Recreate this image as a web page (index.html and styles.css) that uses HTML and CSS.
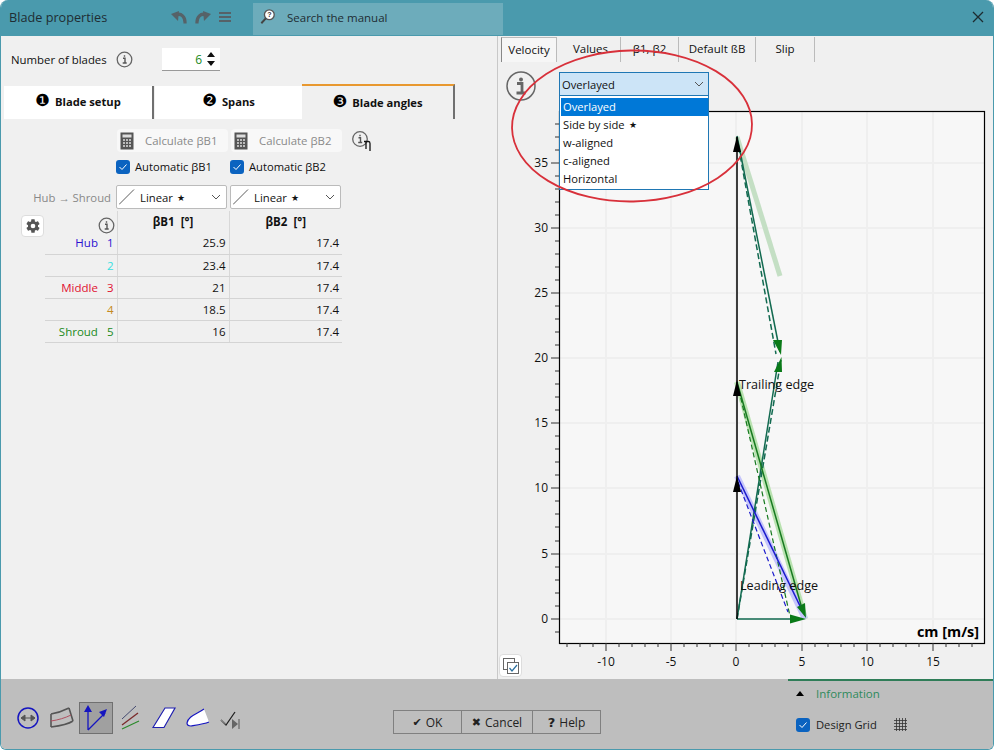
FILE: index.html
```html
<!DOCTYPE html>
<html lang="en">
<head>
<meta charset="utf-8">
<title>Blade properties</title>
<link rel="stylesheet" href="styles.css">
</head>
<body>
<div class="window">
  <header class="titlebar">
    <div class="title">Blade properties</div>
    <div class="title-tools">
      <svg class="ico" width="16" height="14" viewBox="0 0 16 14"><path d="M14 13.500C14.500 7 10 2.500 5 5" fill="none" stroke="#566268" stroke-width="3.200"/><path d="M0 4L8 1l-1 10z" fill="#566268"/></svg>
      <svg class="ico" width="16" height="14" viewBox="0 0 16 14"><path d="M2 13.500C1.500 7 6 2.500 11 5" fill="none" stroke="#566268" stroke-width="3.200"/><path d="M16 4L8 1l1 10z" fill="#566268"/></svg>
      <svg class="ico" width="12" height="10" viewBox="0 0 12 10"><path d="M0 1h12M0 5h12M0 9h12" stroke="#566268" stroke-width="2"/></svg>
    </div>
    <div class="search">
      <svg width="16" height="16" viewBox="0 0 18 18"><circle cx="10.500" cy="6.500" r="5.500" fill="#fff" stroke="#555" stroke-width="1.500"/><path d="M6.500 10.500L1.500 16" stroke="#444" stroke-width="2.200"/><text x="10.500" y="9.500" class="q">?</text></svg>
      <span>Search the manual</span>
    </div>
    <svg class="close" width="12" height="12" viewBox="0 0 12 12"><path d="M1 1l10 10M11 1L1 11" stroke="#1d2b30" stroke-width="1.300"/></svg>
  </header>

  <main class="main">
    <section class="left">
      <div class="blades">
        <span class="blades-label">Number of blades</span>
        <span class="info"><svg width="17" height="17" viewBox="0 0 17 17"><circle cx="8.500" cy="8.500" r="7.300" fill="none" stroke="#666" stroke-width="1.300"/><path d="M7 7.300h2v4.500M6.700 12h4M8.500 4.200v1.600" fill="none" stroke="#555" stroke-width="1.400"/></svg></span>
        <div class="spin"><span class="spin-val">6</span><svg width="10" height="18" viewBox="0 0 10 18"><path d="M5 2l4 5H1zM1 11h8l-4 5z" fill="#111"/></svg></div>
      </div>

      <div class="tabs">
        <div class="tab tab-first"><b class="num">❶</b>Blade setup</div>
        <div class="tab tab-second"><b class="num">❷</b>Spans</div>
        <div class="tab tab-active"><b class="num">❸</b>Blade angles</div>
      </div>

      <div class="angles">
        <div class="calc-row">
          <button class="calc"><svg width="14" height="18" viewBox="0 0 14 18"><rect x="0.500" y="0.500" width="13" height="17" fill="#555"/><rect x="2.500" y="2.500" width="9" height="3" fill="#ddd"/><path d="M3 8h2M6 8h2M9 8h2M3 11h2M6 11h2M9 11h2M3 14h2M6 14h2M9 14h2" stroke="#ddd" stroke-width="1.500"/></svg><span>Calculate βB1</span></button>
          <button class="calc"><svg width="14" height="18" viewBox="0 0 14 18"><rect x="0.500" y="0.500" width="13" height="17" fill="#555"/><rect x="2.500" y="2.500" width="9" height="3" fill="#ddd"/><path d="M3 8h2M6 8h2M9 8h2M3 11h2M6 11h2M9 11h2M3 14h2M6 14h2M9 14h2" stroke="#ddd" stroke-width="1.500"/></svg><span>Calculate βB2</span></button>
          <span class="calc-info"><svg width="24" height="22" viewBox="0 0 24 22"><circle cx="8" cy="8" r="7.300" fill="none" stroke="#666" stroke-width="1.300"/><path d="M6.500 6.800h2v4.500M6.200 11.500h4M8 3.700v1.600" fill="none" stroke="#555" stroke-width="1.400"/><path d="M12 10.500h4.500c1 0 1.500 1 1.500 2V20M14 10v8" fill="none" stroke="#111" stroke-width="1.300"/></svg></span>
        </div>
        <div class="auto-row">
          <label class="check"><span class="box"><svg width="14" height="14" viewBox="0 0 14 14"><path d="M3.500 7l2.500 2.500 4.500-5" fill="none" stroke="#fff" stroke-width="1"/></svg></span>Automatic βB1</label>
          <label class="check"><span class="box"><svg width="14" height="14" viewBox="0 0 14 14"><path d="M3.500 7l2.500 2.500 4.500-5" fill="none" stroke="#fff" stroke-width="1"/></svg></span>Automatic βB2</label>
        </div>
        <div class="dist-row">
          <span class="dist-label">Hub → Shroud</span>
          <div class="combo"><svg width="16" height="16" viewBox="0 0 16 16"><path d="M0 15.500L15 .5" stroke="#333" stroke-width=".8"/></svg><span>Linear <small class="star">★</small></span><svg class="chev" width="10" height="6" viewBox="0 0 10 6"><path d="M1 1l4 4 4-4" fill="none" stroke="#555"/></svg></div>
          <div class="combo"><svg width="16" height="16" viewBox="0 0 16 16"><path d="M0 15.500L15 .5" stroke="#333" stroke-width=".8"/></svg><span>Linear <small class="star">★</small></span><svg class="chev" width="10" height="6" viewBox="0 0 10 6"><path d="M1 1l4 4 4-4" fill="none" stroke="#555"/></svg></div>
        </div>
        <div class="grid-wrap">
          <button class="gear"><svg width="16" height="16" viewBox="0 0 24 24"><path fill="#555" d="M19.430 12.980c.04-.32.070-.64.070-.98s-.03-.66-.07-.98l2.110-1.650c.19-.15.240-.42.120-.64l-2-3.460c-.12-.22-.39-.3-.61-.22l-2.490 1c-.52-.4-1.080-.73-1.690-.98l-.38-2.650A.49.49 0 0 0 14 2h-4c-.25 0-.46.18-.49.42l-.38 2.650c-.61.250-1.170.59-1.690.98l-2.490-1c-.23-.09-.49 0-.61.220l-2 3.460c-.13.220-.07.490.12.640l2.110 1.650c-.04.320-.07.650-.07.980s.03.660.07.980l-2.110 1.650c-.19.150-.24.420-.12.640l2 3.460c.12.220.39.300.61.220l2.490-1c.52.400 1.080.730 1.690.980l.38 2.650c.03.240.24.420.49.420h4c.25 0 .46-.18.490-.42l.38-2.650c.61-.25 1.170-.59 1.690-.98l2.490 1c.23.090.49 0 .61-.22l2-3.460c.12-.22.070-.49-.12-.64zM12 15.500a3.500 3.500 0 1 1 0-7 3.500 3.500 0 0 1 0 7z"/></svg></button>
          <table class="angle-table">
            <thead>
              <tr><th class="th-info"><svg width="17" height="17" viewBox="0 0 17 17"><circle cx="8.500" cy="8.500" r="7.300" fill="none" stroke="#666" stroke-width="1.300"/><path d="M7 7.300h2v4.500M6.700 12h4M8.500 4.200v1.600" fill="none" stroke="#555" stroke-width="1.400"/></svg></th><th>βB1&nbsp; [°]</th><th>βB2&nbsp; [°]</th></tr>
            </thead>
            <tbody>
              <tr><td class="rowh c-hub">Hub<i>1</i></td><td>25.9</td><td>17.4</td></tr>
              <tr><td class="rowh c-2"><i>2</i></td><td>23.4</td><td>17.4</td></tr>
              <tr><td class="rowh c-mid">Middle<i>3</i></td><td>21</td><td>17.4</td></tr>
              <tr><td class="rowh c-4"><i>4</i></td><td>18.5</td><td>17.4</td></tr>
              <tr><td class="rowh c-shr">Shroud<i>5</i></td><td>16</td><td>17.4</td></tr>
            </tbody>
          </table>
        </div>
      </div>
    </section>

    <section class="right">
      <nav class="rtabs">
        <div class="rtab rtab-active">Velocity</div>
        <div class="rtab rtab-values">Values</div>
        <div class="rtab rtab-beta">β1, β2</div>
        <div class="rtab rtab-default">Default ßB</div>
        <div class="rtab rtab-slip">Slip</div>
      </nav>
      <div class="chart-area">
        <svg class="chart" width="496" height="608" viewBox="498 62 496 608">
          <rect x="559.500" y="111.500" width="425" height="532" fill="#f7f7f7"/>
          <g stroke="#efefef" stroke-width="2">
            <path d="M606 112V643M671 112V643M736 112V643M802 112V643M867 112V643M933 112V643"/>
            <path d="M560 163H984M560 228H984M560 293H984M560 358H984M560 423H984M560 488H984M560 554H984M560 619H984"/>
          </g>
          <rect x="559.500" y="111.500" width="425" height="532" fill="none" stroke="#000" stroke-width="1.200"/>
          <g stroke="#333" stroke-width="1">
            <path d="M551 163h8M551 228h8M551 293h8M551 358h8M551 423h8M551 488h8M551 554h8M551 619h8"/>
            <path d="M555 124h4M555 137h4M555 150h4M555 176h4M555 189h4M555 202h4M555 215h4M555 241h4M555 254h4M555 267h4M555 280h4M555 306h4M555 319h4M555 332h4M555 345h4M555 371h4M555 384h4M555 397h4M555 410h4M555 436h4M555 449h4M555 462h4M555 475h4M555 501h4M555 514h4M555 527h4M555 541h4M555 567h4M555 580h4M555 593h4M555 606h4M555 632h4"/>
            <path d="M606 643v8M671 643v8M736 643v8M802 643v8M867 643v8M933 643v8"/>
            <path d="M567 643v4M580 643v4M593 643v4M619 643v4M632 643v4M645 643v4M658 643v4M684 643v4M697 643v4M710 643v4M723 643v4M749 643v4M762 643v4M775 643v4M788 643v4M815 643v4M828 643v4M841 643v4M854 643v4M880 643v4M893 643v4M906 643v4M919 643v4M946 643v4M959 643v4M972 643v4"/>
          </g>
          <g class="axis-y">
            <text x="548" y="167">35</text><text x="548" y="232">30</text><text x="548" y="297">25</text><text x="548" y="362">20</text><text x="548" y="427">15</text><text x="548" y="492">10</text><text x="548" y="558">5</text><text x="548" y="623">0</text>
          </g>
          <g class="axis-x">
            <text x="606" y="666">-10</text><text x="671" y="666">-5</text><text x="736" y="666">0</text><text x="802" y="666">5</text><text x="867" y="666">10</text><text x="933" y="666">15</text>
          </g>
          <text class="axis-title" x="979" y="637">cm [m/s]</text>

          <path d="M737 137L780 276" stroke="#c4dfc4" stroke-width="5"/>
          <path d="M737 382L805 619" stroke="#b9e2b0" stroke-width="6"/>
          <path d="M737 476L805 619" stroke="#c5c5fb" stroke-width="6"/>

          <path d="M737 136L780 352" stroke="#126a50" stroke-width="1.500" fill="none"/>
          <path d="M737 138L776 354" stroke="#126a50" stroke-width="1.500" stroke-dasharray="6 3" fill="none"/>
          <path d="M737 619L778 362" stroke="#126a50" stroke-width="1.500" fill="none"/>
          <path d="M737 619L781 360" stroke="#126a50" stroke-width="1.500" stroke-dasharray="6 3" fill="none"/>

          <path d="M737 382L803 612" stroke="#177a20" stroke-width="1.500"/>
          <path d="M739 390L790 616" stroke="#177a20" stroke-width="1.200" stroke-dasharray="5 3"/>
          <path d="M737 476L801 608" stroke="#1a1acc" stroke-width="1.500"/>
          <path d="M738 482L788 612" stroke="#1a1acc" stroke-width="1.200" stroke-dasharray="5 3"/>
          <path d="M737 619H795" stroke="#126a50" stroke-width="1.500"/>

          <path d="M737 137V619" stroke="#000" stroke-width="1.500"/>
          <path d="M737 136l-4 16h8zM737 380l-4 16h8zM737 476l-4 16h8z" fill="#000"/>
          <path d="M790 614.500v9l16-4.500zM797 607l8-4 1 15z" fill="#0a7a18"/>
          <path d="M773 340h9l-1 15zM781.500 357l.5 15h-8z" fill="#0a7a18"/>

          <text class="chart-label" x="739" y="389">Trailing edge</text>
          <text class="chart-label" x="740" y="590">Leading edge</text>
        </svg>
        <button class="chart-btn"><svg width="18" height="18" viewBox="0 0 18 18"><rect x="1.500" y="1.500" width="11" height="11" fill="none" stroke="#666"/><rect x="5.500" y="5.500" width="11" height="11" fill="#fff" stroke="#666"/><path d="M7.500 11l2.500 3 5-6" fill="none" stroke="#2a6f9e" stroke-width="1.200"/></svg></button>
        <span class="big-info"><svg width="30" height="30" viewBox="0 0 30 30"><circle cx="15" cy="15" r="14" fill="none" stroke="#666" stroke-width="1.500"/><path d="M11 12.500h5v9M10.500 22h9" fill="none" stroke="#666" stroke-width="2.800"/><circle cx="15" cy="8.500" r="2" fill="#666"/></svg></span>
        <div class="dropdown">
          <div class="dd-head"><span>Overlayed</span><svg width="10" height="6" viewBox="0 0 10 6"><path d="M1 1l4 4 4-4" fill="none" stroke="#555"/></svg></div>
          <ul class="dd-list">
            <li class="dd-sel">Overlayed</li>
            <li>Side by side <small class="star">★</small></li>
            <li>w-aligned</li>
            <li>c-aligned</li>
            <li>Horizontal</li>
          </ul>
        </div>
      </div>
    </section>
  </main>

  <footer class="footer">
    <div class="modes">
      <span class="mode"><svg width="24" height="24" viewBox="0 0 24 24"><circle cx="12" cy="12" r="10" fill="none" stroke="#1515c0" stroke-width="1.500"/><path d="M5 12h14M5 12l4-3v6zM19 12l-4-3v6z" stroke="#555" fill="#555"/></svg></span>
      <span class="mode"><svg width="24" height="24" viewBox="0 0 24 24"><path d="M1 8C7 7 13 5 19 2M1 21C9 20 17 19 23 15M1 8v13M19 2l4 13" fill="none" stroke="#555" stroke-width="1.600"/><path d="M1 15C8 14 15 12 21 9" fill="none" stroke="#b05060"/></svg></span>
      <span class="mode mode-on"><svg width="24" height="28" viewBox="0 0 24 28"><path d="M4 26V5M4 26L21 9" stroke="#1515c0" stroke-width="1.300"/><path d="M4 1l-4 7h8zM23 5l-8 3 5 5z" fill="#1515c0"/></svg></span>
      <span class="mode"><svg width="24" height="26" viewBox="0 0 24 26"><path d="M4 14L18 1" stroke="#444a70"/><path d="M4 20L20 8" stroke="#7a2a2a" stroke-width="1.300"/><path d="M4 24l17-8" stroke="#2a8a2a" stroke-width="1.300"/></svg></span>
      <span class="mode"><svg width="24" height="22" viewBox="0 0 24 22"><path d="M1 20.500L13 1h10L12 20.500z" fill="#fff" stroke="#2020b0" stroke-width="1.200"/></svg></span>
      <span class="mode"><svg width="24" height="20" viewBox="0 0 24 20"><path d="M1 15c1-7 10-9 17-14l5 13c-5 2-12 3-18 4-3 0-4-1-4-3z" fill="#fff"/><path d="M18 1C11 6 2 8 1 15c0 2 1 3 4 3 6-1 13-2 18-4" fill="none" stroke="#1515c0" stroke-width="1.200"/></svg></span>
      <span class="mode"><svg width="24" height="22" viewBox="0 0 24 22"><path d="M1 13l5 5L15 5" fill="none" stroke="#222" stroke-width="1.300"/><path d="M1 13l5 4" stroke="#888" stroke-width="1.500"/><path d="M12 12l6 5-6 5z" fill="#666"/><path d="M19 12v10" stroke="#555"/></svg></span>
    </div>
    <div class="actions">
      <button class="act act-ok"><span class="gly">✔</span>OK</button>
      <button class="act act-cancel"><span class="gly">✖</span>Cancel</button>
      <button class="act act-help"><b class="gly gly-q">?</b>Help</button>
    </div>
    <div class="foot-right">
      <div class="infohead"><span class="tri"></span><span>Information</span></div>
      <div class="grid-row">
        <span class="box"><svg width="14" height="14" viewBox="0 0 14 14"><path d="M3.500 7l2.500 2.500 4.500-5" fill="none" stroke="#fff" stroke-width="1"/></svg></span>
        <span>Design Grid</span>
        <svg class="gridico" width="13" height="13" viewBox="0 0 13 13"><path d="M2.500 0v13M5.500 0v13M8.500 0v13M11.500 0v13M0 2.500h13M0 5.500h13M0 8.500h13M0 11.500h13" stroke="#333" stroke-width=".8"/></svg>
      </div>
    </div>
  </footer>

  <svg class="ring" width="250" height="160" viewBox="0 0 250 160"><ellipse cx="125" cy="80" rx="120" ry="75.500" fill="none" stroke="#d8303a" stroke-width="1.800" transform="rotate(-1 125 80)"/></svg>
</div>
</body>
</html>
```
FILE: styles.css
```css
* { box-sizing: border-box; }
html, body { margin: 0; padding: 0; background: #fff; }
body { width: 994px; height: 750px; overflow: hidden; font-family: "Open Sans", "Noto Sans", "Liberation Sans", sans-serif; font-size: 12px; color: #111; }
button { font: inherit; color: inherit; }

.window { position: relative; width: 994px; height: 750px; display: flex; flex-direction: column; background: #f0f0f0; border-left: 1px solid #4a9aad; border-right: 1px solid #4a9aad; border-bottom: 1px solid #4a9aad; border-radius: 8px 8px 6px 6px; overflow: hidden; }

.titlebar { height: 36px; flex: none; display: flex; align-items: center; background: #4a9aad; padding: 0 0 2px 8px; color: #1f2d33; }
.title { width: 162px; font-size: 12.700px; }
.title-tools { width: 82px; display: flex; align-items: center; gap: 8px; margin-top: -1px; }
.ico { display: block; }
.search { width: 250px; height: 32px; margin-top: 4px; background: #6dacbb; display: flex; align-items: center; padding: 0 0 4px 7px; gap: 11px; font-size: 11.500px; color: #1f2d33; }
.q { font: bold 8px "Liberation Sans", sans-serif; text-anchor: middle; fill: #333; }
.close { margin-left: auto; margin-right: 9px; }

.main { flex: 1; display: flex; min-height: 0; }
.left { width: 497px; flex: none; border-right: 1px solid #c8c8c8; display: flex; flex-direction: column; }
.blades { display: flex; align-items: center; height: 36px; padding: 11px 0 0 10px; }
.blades-label { width: 105px; font-size: 11.400px; }
.info { width: 46px; display: flex; }
.spin { width: 58px; height: 23px; background: #fff; border-bottom: 1px solid #999; display: flex; align-items: center; justify-content: flex-end; gap: 4px; padding-right: 4px; }
.spin-val { color: #1a8a1a; font-size: 12px; }

.tabs { display: flex; margin: 12px 0 0 3px; height: 35px; align-items: flex-end; }
.tab { height: 33px; background: #fff; display: flex; align-items: center; justify-content: center; font-weight: 700; font-size: 11.200px; color: #111; padding-bottom: 2px; }
.tab-first { width: 150px; border-right: 2px solid #707070; margin-right: 1px; }
.tab-second { width: 147px; }
.tab-active { width: 153px; height: 35px; background: #f0f0f0; border-top: 2px solid #e8982f; border-right: 2px solid #707070; padding-bottom: 0; }
.num { font-size: 16.500px; line-height: 1; font-family: "DejaVu Sans", sans-serif; font-weight: 400; margin-right: 5px; color: #000; }

.angles { display: flex; flex-direction: column; }
.calc-row { display: flex; margin: 10px 0 0 116px; gap: 3px; align-items: flex-start; }
.calc { width: 111px; height: 23px; background: #f8f8f8; border: 0; border-radius: 4px; display: flex; align-items: center; padding: 0 0 0 3px; color: #8a8a8a; font-size: 11.400px; }
.calc span { margin-left: 11px; }
.calc-info { margin-left: 7px; margin-top: 2px; display: flex; }
.auto-row { display: flex; margin: 6px 0 0 115px; }
.check { width: 114px; display: flex; align-items: center; gap: 5px; font-size: 11.200px; }
.box { width: 14px; height: 14px; background: #0b63c0; border-radius: 3px; display: inline-flex; flex: none; }
.dist-row { display: flex; align-items: center; margin: 11px 0 0 0; }
.dist-label { width: 115px; text-align: right; padding-right: 5px; color: #888; font-size: 11.300px; }
.combo { width: 111px; height: 24px; margin-right: 3px; background: #fff; border: 1px solid #bbb; border-radius: 2px; display: flex; align-items: center; padding: 0 5px 0 2px; font-size: 11.300px; }
.combo span { margin-left: 5px; }
.star { font-size: 8.500px; vertical-align: 1px; margin-left: 1px; }
.chev { margin-left: auto; }

.grid-wrap { position: relative; margin-top: 2px; padding-left: 44px; }
.gear { position: absolute; left: 20px; top: 4px; width: 23px; height: 22px; border: 1px solid #ddd; border-radius: 4px; background: #fff; padding: 0; display: flex; align-items: center; justify-content: center; }
.angle-table { border-collapse: collapse; table-layout: fixed; width: 297px; font-size: 11.500px; }
.angle-table th { height: 20px; font-weight: 700; text-align: center; border-left: 1px solid #d8d8d8; padding: 0 0 1px; }
.angle-table th:first-child { border-left: 0; text-align: right; padding: 6px 2px 0 0; vertical-align: top; }
.th-info svg { display: inline-block; vertical-align: top; margin-bottom: -6px; }
.angle-table th:nth-child(1), .angle-table td:nth-child(1) { width: 72px; }
.angle-table th:nth-child(2), .angle-table td:nth-child(2) { width: 112px; }
.angle-table td { height: 22px; padding: 0 3px 0 0; text-align: right; border-left: 1px solid #d8d8d8; border-bottom: 1px solid #d4d4d4; }
.angle-table td:first-child { border-left: 0; }
.rowh i { font-style: normal; margin-left: 9px; }
.c-hub { color: #2a10d0; } .c-2 { color: #35dfe0; } .c-mid { color: #e01030; } .c-4 { color: #c58a20; } .c-shr { color: #1a8a1a; }

.right { flex: 1; display: flex; flex-direction: column; min-width: 0; }
.rtabs { display: flex; height: 26px; flex: none; padding: 1px 0 0 3px; }
.rtab { height: 25px; display: flex; align-items: center; justify-content: center; border-right: 1px solid #bbb; font-size: 11.500px; padding-bottom: 2px; }
.rtab-active { width: 56px; margin-right: 4px; border: 1px solid #bbb; border-bottom: 0; background: #f6f6f6; border-left: 1px solid #888; }
.rtab-values { width: 60px; }
.rtab-beta { width: 58px; }
.rtab-default { width: 77px; }
.rtab-slip { width: 59px; }
.chart-area { position: relative; flex: 1; }
.chart { position: absolute; left: 0; top: 0; display: block; }
.axis-y text { font-size: 12px; text-anchor: end; fill: #111; }
.axis-x text { font-size: 12px; text-anchor: middle; fill: #111; }
.axis-title { font-weight: 700; font-size: 14.400px; text-anchor: end; fill: #000; }
.chart-label { font-size: 12.600px; fill: #111; }

.chart-btn { position: absolute; left: 1px; top: 592px; width: 23px; height: 23px; border: 1px solid #ddd; border-radius: 4px; background: #fff; padding: 0; display: flex; align-items: center; justify-content: center; }
.big-info { position: absolute; left: 8px; top: 9px; display: flex; }
.dropdown { position: absolute; left: 61px; top: 10px; width: 150px; }
.dd-head { height: 24px; background: #cce4f7; border: 1px solid #1f77b4; display: flex; align-items: center; justify-content: space-between; padding: 0 4px 0 2px; font-size: 11.200px; }
.dd-list { list-style: none; margin: 0; padding: 2px 0 1px; background: #fff; border: 1px solid #1f77b4; border-top: 0; }
.dd-list li { height: 18px; line-height: 18px; padding-left: 2px; font-size: 11.200px; margin-left: 1px; }
.dd-sel { background: #0078d7; color: #fff; }

.footer { height: 70px; flex: none; background: #bebebe; position: relative; display: flex; }
.modes { display: flex; align-items: center; padding: 8px 0 0 10px; width: 392px; height: 70px; }
.mode { width: 34px; height: 32px; display: flex; align-items: center; justify-content: center; flex: none; }
.mode-on { background: #a0a0a0; border: 1px solid #707070; }
.actions { display: flex; align-self: flex-start; margin-top: 31px; height: 24px; width: 208px; border: 1px solid #808080; }
.act { border: 0; background: transparent; border-right: 1px solid #808080; display: flex; align-items: center; justify-content: center; gap: 4px; padding: 0; font-size: 12px; color: #222; }
.act-ok { width: 68px; }
.act-cancel { width: 71px; }
.act-help { flex: 1; border-right: 0; }
.gly { font-family: "DejaVu Sans", sans-serif; font-size: 11px; }
.gly-q { font-size: 13px; }
.foot-right { position: absolute; right: 0; top: 0; width: 205px; height: 69px; border-top: 2px solid #2f7d58; padding-left: 8px; }
.infohead { display: flex; align-items: center; height: 24px; color: #2f8a5c; font-size: 11.500px; gap: 12px; }
.tri { width: 0; height: 0; border-left: 4px solid transparent; border-right: 4px solid transparent; border-bottom: 5px solid #000; }
.grid-row { display: flex; align-items: center; margin-top: 12px; gap: 6px; font-size: 11.200px; color: #222; }
.gridico { margin-left: 11px; }
.ring { position: absolute; left: 506px; top: 46px; pointer-events: none; }
```
